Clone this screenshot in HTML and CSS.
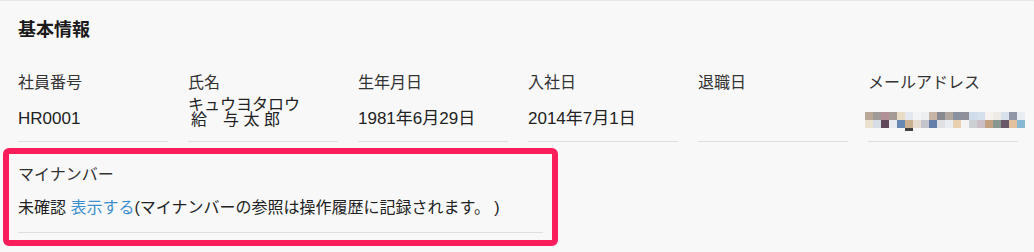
FILE: index.html
```html
<!DOCTYPE html>
<html lang="ja">
<head>
<meta charset="utf-8">
<title>基本情報</title>
<link rel="stylesheet" href="styles.css">
</head>
<body>
<div class="panel">
  <h2 class="title">基本情報</h2>
  <div class="fields">
    <div class="field">
      <div class="label">社員番号</div>
      <div class="value value-single">HR0001</div>
    </div>
    <div class="field">
      <div class="label">氏名</div>
      <div class="value value-multi">
        <div>キュウヨタロウ</div>
        <div class="name-kanji">給　与 太 郎</div>
      </div>
    </div>
    <div class="field">
      <div class="label">生年月日</div>
      <div class="value value-single">1981年6月29日</div>
    </div>
    <div class="field">
      <div class="label">入社日</div>
      <div class="value value-single">2014年7月1日</div>
    </div>
    <div class="field">
      <div class="label">退職日</div>
      <div class="value value-single"></div>
    </div>
    <div class="field">
      <div class="label">メールアドレス</div>
      <div class="value value-mosaic">
        <svg class="mosaic" width="160" height="20" viewBox="0 0 160 20" aria-hidden="true">
          <rect x="0" y="0" width="8" height="8" fill="#baa896"/>
          <rect x="8" y="0" width="8" height="8" fill="#a09a98"/>
          <rect x="16" y="0" width="8" height="8" fill="#b29098"/>
          <rect x="24" y="0" width="8" height="8" fill="#a49c94"/>
          <rect x="32" y="0" width="8" height="8" fill="#e8dcc6"/>
          <rect x="40" y="0" width="8" height="8" fill="#e4e8ee"/>
          <rect x="48" y="0" width="8" height="8" fill="#f2f4f6"/>
          <rect x="56" y="0" width="8" height="8" fill="#eceef0"/>
          <rect x="64" y="0" width="8" height="8" fill="#c6b4a4"/>
          <rect x="72" y="0" width="8" height="8" fill="#888a92"/>
          <rect x="80" y="0" width="8" height="8" fill="#b2a8a0"/>
          <rect x="88" y="0" width="8" height="8" fill="#8a92a2"/>
          <rect x="96" y="0" width="8" height="8" fill="#90909a"/>
          <rect x="104" y="0" width="8" height="8" fill="#d0dcea"/>
          <rect x="112" y="0" width="8" height="8" fill="#d4e0ec"/>
          <rect x="120" y="0" width="8" height="8" fill="#f6f2ee"/>
          <rect x="128" y="0" width="8" height="8" fill="#eeeae6"/>
          <rect x="136" y="0" width="8" height="8" fill="#d8e0ec"/>
          <rect x="144" y="0" width="8" height="8" fill="#9098a8"/>
          <rect x="152" y="0" width="8" height="8" fill="#e8eef4"/>
          <rect x="0" y="8" width="8" height="8" fill="#ece0ce"/>
          <rect x="8" y="8" width="8" height="8" fill="#d8dce4"/>
          <rect x="16" y="8" width="8" height="8" fill="#604858"/>
          <rect x="24" y="8" width="8" height="8" fill="#e8ecf0"/>
          <rect x="32" y="8" width="8" height="8" fill="#6888b2"/>
          <rect x="40" y="8" width="8" height="8" fill="#c8b090"/>
          <rect x="48" y="8" width="8" height="8" fill="#e4dccf"/>
          <rect x="56" y="8" width="8" height="8" fill="#c4c4cc"/>
          <rect x="64" y="8" width="8" height="8" fill="#6480aa"/>
          <rect x="72" y="8" width="8" height="8" fill="#e0e0e4"/>
          <rect x="80" y="8" width="8" height="8" fill="#e8eef4"/>
          <rect x="88" y="8" width="8" height="8" fill="#e8d0b0"/>
          <rect x="96" y="8" width="8" height="8" fill="#f4f4f4"/>
          <rect x="104" y="8" width="8" height="8" fill="#ccd0d4"/>
          <rect x="112" y="8" width="8" height="8" fill="#ccc0c8"/>
          <rect x="120" y="8" width="8" height="8" fill="#c2a080"/>
          <rect x="128" y="8" width="8" height="8" fill="#889890"/>
          <rect x="136" y="8" width="8" height="8" fill="#685868"/>
          <rect x="144" y="8" width="8" height="8" fill="#e2c0a0"/>
          <rect x="152" y="8" width="8" height="8" fill="#88b8d2"/>
          <rect x="40" y="16" width="8" height="3" fill="#404040"/>
        </svg>
      </div>
    </div>
  </div>
  <div class="highlight">
    <div class="field field-wide">
      <div class="label">マイナンバー</div>
      <div class="value value-note">未確認 <a class="link" href="#">表示する</a>(マイナンバーの参照は操作履歴に記録されます。 )</div>
    </div>
  </div>
</div>
</body>
</html>
```

FILE: styles.css
```css
* {
  box-sizing: border-box;
}

html,
body {
  margin: 0;
  padding: 0;
  background: #f8f8f8;
}

body {
  font-family: "Liberation Sans", "Noto Sans CJK JP", sans-serif;
  color: #222222;
  font-size: 16px;
}

.panel {
  border-top: 1px solid #e6e6e6;
  height: 252px;
}

.title {
  margin: 0;
  padding: 17px 18px 0;
  font-size: 18px;
  line-height: 24px;
  font-weight: bold;
  color: #1a1a1a;
}

.fields {
  display: grid;
  grid-template-columns: repeat(6, 150px);
  column-gap: 20px;
  padding: 0 18px;
  margin-top: 31px;
}

.field {
  display: flex;
  flex-direction: column;
}

.label {
  line-height: 20px;
  color: #333333;
  white-space: nowrap;
}

.value {
  height: 49px;
  border-bottom: 1px solid #dedede;
  line-height: 20px;
  white-space: nowrap;
  color: #222222;
}

.value-single {
  padding-top: 16px;
  font-size: 17px;
}

.value-multi {
  padding-top: 4px;
  line-height: 15px;
}

.name-kanji {
  padding-left: 3px;
}

.value-mosaic {
  padding-top: 19px;
}

.mosaic {
  display: block;
  margin-left: -3px;
}

.highlight {
  width: 555px;
  margin: 6px 0 0 3px;
  padding: 11px 9px 7px;
  border: 6px solid #fa1d5c;
  border-radius: 6px;
}

.field-wide {
  width: 525px;
}

.value-note {
  height: 48px;
  padding-top: 13px;
}

.link {
  color: #3e8fcd;
  text-decoration: none;
}
```
